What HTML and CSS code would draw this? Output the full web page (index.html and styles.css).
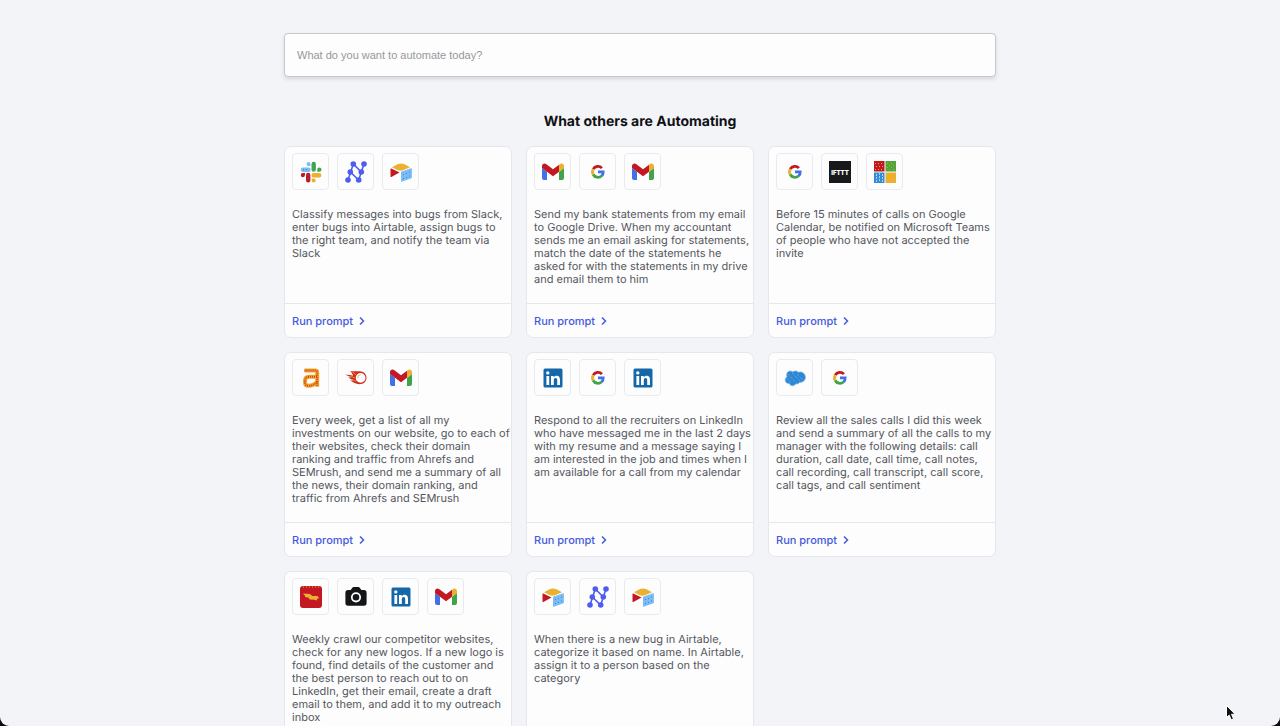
FILE: index.html
```html
<!DOCTYPE html>
<html lang="en">
<head>
    <meta charset="utf-8">
    <title>Automate</title>
    <link rel="stylesheet" href="styles.css">
</head>
<body>
    <svg class="sprite" aria-hidden="true">
        <symbol id="slack" viewBox="0 0 22 22">
            <path fill="#7abdf2" d="M8.500 1a2 2 0 0 1 2 2v2h-2a2 2 0 0 1 0-4zM3 6.500h5.500a2.200 2.200 0 0 1 0 4.400H3a2.200 2.200 0 0 1 0-4.400z"/>
            <path fill="#41a84e" d="M13.700 .8a2.200 2.200 0 0 1 2.200 2.200v5.600a2.200 2.200 0 0 1-4.400 0V3a2.200 2.200 0 0 1 2.200-2.200zM19.400 6.600a2 2 0 0 1 0 4.200h-2.200V8.700a2.100 2.100 0 0 1 2.200-2.100z"/>
            <path fill="#ebb02d" d="M13.700 12h5.500a2.200 2.200 0 0 1 0 4.400h-5.500a2.200 2.200 0 0 1 0-4.400zM11.700 17.400h2a2 2 0 1 1-2 2z"/>
            <path fill="#c41724" d="M8.200 11.800a2.200 2.200 0 0 1 2.200 2.200v5.300a2.200 2.200 0 0 1-4.400 0V14a2.200 2.200 0 0 1 2.200-2.200zM2.800 12H5v2a2.100 2.100 0 1 1-2.200-2z"/>
            <path fill="none" stroke="#3a7a8c" stroke-width=".9" stroke-dasharray="1 2" d="M3 8.700h6M13.700 2.500v6M8.200 14v6"/>
        </symbol>
        <symbol id="nanonets" viewBox="0 0 22 22">
            <path fill="none" stroke="#4d5df0" stroke-width="1.600" d="M3 19 8.300 3l8 8L19 3M5.300 11l8.400 8L16.300 11"/>
            <g fill="#4d5df0">
                <circle cx="8.300" cy="3" r="2.800"/>
                <circle cx="19" cy="3" r="2.800"/>
                <circle cx="5.300" cy="11" r="2.800"/>
                <circle cx="16.300" cy="11" r="2.800"/>
                <circle cx="3" cy="19" r="2.800"/>
                <circle cx="13.700" cy="19" r="2.800"/>
            </g>
        </symbol>
        <symbol id="airtable" viewBox="0 0 22 22">
            <path fill="#ebb02d" d="M2 6.300 8 3.100q3-1.200 6 0L20 6.300 13 9.300q-2.500.9-5 0z"/>
            <path fill="#c41724" d="M.5 8q0-.8.800-.5l8.200 4L1.400 16q-.9.400-.9-.5z"/>
            <path fill="#7abcf8" d="M11 11.400q0-.6.600-.8l9.500-3.300q.8-.3.800.5v8.800q0 .5-.5.700l-9.600 3.400q-.8.200-.8-.6z"/>
            <path fill="none" stroke="#3d74a8" stroke-width=".8" stroke-dasharray="1 3" d="M13.500 13v5M16.500 12v5M19.500 10.500v5"/>
        </symbol>
        <symbol id="gmail" viewBox="0 0 22 22">
            <path fill="#4270e8" d="M0 7l5 3.700V19H2a2 2 0 0 1-2-2z"/>
            <path fill="#3fa548" d="M17 10.700 22 7v10a2 2 0 0 1-2 2h-3z"/>
            <path fill="#c41724" d="M0 7V5.200C0 2.700 2.700 1.900 4.400 3.200L11 8.200l6-4.500v7L11 15.200z"/>
            <path fill="#ebb02d" d="M17 3.700l.7-.5C19.500 1.900 22 2.900 22 5.200V7l-5 3.700z"/>
        </symbol>
        <symbol id="google" viewBox="0 0 22 22">
            <g fill="none" stroke-width="2.800">
                <path stroke="#c41724" d="M6.200 8.200A5.400 5.400 0 0 1 14.900 7.100"/>
                <path stroke="#ebb02d" d="M6.200 13.600A5.400 5.400 0 0 1 6.200 8.200"/>
                <path stroke="#3fa548" d="M14.500 15A5.400 5.400 0 0 1 6.200 13.500"/>
                <path stroke="#4270e8" d="M11 10.900h5.200q.1 2.500-1.700 4.100"/>
            </g>
        </symbol>
        <symbol id="ifttt" viewBox="0 0 22 22">
            <path fill="#171819" d="M0 0h22v22H0z"/>
            <text class="ifttt-text" x="11" y="14" text-anchor="middle">IFTTT</text>
        </symbol>
        <symbol id="microsoft" viewBox="0 0 22 22">
            <path fill="#c41724" d="M0 0h10.500v10.500H0z"/>
            <path fill="#52a43c" d="M11.500 0H22v10.500H11.500z"/>
            <path fill="#348bd6" d="M0 11.500h10.500V22H0z"/>
            <path fill="#ebb02d" d="M11.500 11.500H22V22H11.500z"/>
            <path fill="none" stroke="#ebb02d" stroke-width="1" stroke-dasharray="1 2" d="M1 2.500h9M2 5.500h8M1 8.500h9M13 2l7 7M13 6l3 3M17 2l4 4"/>
            <path fill="none" stroke="#a6d4f7" stroke-width="1" stroke-dasharray="2 1" d="M2.500 13v8M5.500 12v9M8.500 13v8"/>
        </symbol>
        <symbol id="ahrefs" viewBox="0 0 22 22">
            <path fill="none" stroke="#f0a52c" stroke-width="4" d="M4.500 3.500H15q2.200 0 2.200 2.200v14.100M17 9.800H9q-4 0-4 4v1.500q0 3.500 3.500 3.500 5 0 8.500-4"/>
            <path fill="none" stroke="#d2451d" stroke-width="2" stroke-dasharray="1 1" d="M4.500 3.500H15q2.200 0 2.200 2.200v14M17 9.800H9q-4 0-4 4v1.500q0 3.500 3.500 3.500 5 0 8.500-4"/>
        </symbol>
        <symbol id="semrush" viewBox="0 0 22 22">
            <path fill="#cc2b1e" fill-rule="evenodd" d="M5 4.300h9.500c4 0 7 2.800 7 6.500s-3 6.500-6.900 6.500c-4 0-6.300-2.300-9.600-3.700l3 .2c-2-1.600-3.400-2.700-5-3.200l2.700-.2C4 9 2 8.300.2 7.800c2.500-.3 5.200.2 8 .9C7.600 7 6.600 5.300 5 4.300zM15.600 6a4.900 4.900 0 1 0 0 9.800 4.900 4.900 0 0 0 0-9.800z"/>
            <path fill="none" stroke="#efaa48" stroke-width=".8" d="M7.500 5.300q2.200.5 3.300 2.600M5 9.300l4.800 1.400M7 12.300l3.800 2"/>
            <path fill="none" stroke="#efaa48" stroke-width=".8" d="M12.500 11a3.200 3.200 0 0 1 3.200-3.200"/>
        </symbol>
        <symbol id="linkedin" viewBox="0 0 22 22">
            <rect x="1.500" y="1.500" width="19" height="19" rx="1.500" fill="#1468aa"/>
            <circle cx="5.800" cy="5.900" r="1.700" fill="#fff"/>
            <path fill="#fff" d="M4.400 9h2.800v9H4.400zM9 9h2.700v1.300c.6-1 1.600-1.600 2.900-1.600 2.700 0 3.400 1.800 3.400 4.200V18h-2.800v-4.600c0-1.200-.2-2.300-1.600-2.300s-1.800 1.100-1.800 2.300V18H9z"/>
        </symbol>
        <symbol id="salesforce" viewBox="0 0 22 22">
            <path fill="#2e87d3" stroke="#76b8ec" stroke-width=".8" d="M9 5.100C10.300 3.500 13 3.500 14.200 5.400c3.400-1.400 7.200 1 7.200 4.900 0 3.300-2.900 5.400-5.700 4.900-.8 1.500-2.400 2-3.900 1.500-1.500 2.800-5.300 2.600-6.500-.3-2.300.3-4.100-1.200-4.100-3.400 0-1.400.7-2.500 1.800-3.100C2 6.900 3.500 4.100 6.100 4.100q1.800 0 2.900 1z"/>
            <path fill="none" stroke="#76b8ec" stroke-width=".8" stroke-dasharray="1 1" d="M4 7l7 8M8 6l8 8M13 7l6 6M3 11l4 5"/>
        </symbol>
        <symbol id="crawler" viewBox="0 0 22 22">
            <rect width="22" height="22" rx="3" fill="#c41724"/>
            <path stroke="#ebb02d" stroke-width="1" stroke-dasharray="1 2" d="M3 1h17"/>
            <path fill="#ebb02d" d="M3 7.500l7 .6 2.300 2h5.200l1.800 2.200-2 .1-.4 2-2.500-.6-4.700-.2-1-1.800-3.500-.7-.4-1.600z"/>
        </symbol>
        <symbol id="camera" viewBox="0 0 22 22">
            <path fill="#141516" d="M3 4h2.700L7.400 1.700q.5-.7 1.300-.7h4.700q.8 0 1.300.7L16.400 4H19q2.600 0 2.600 2.600v10.500q0 2.700-2.600 2.700H3Q.4 19.800.4 17.100V6.600Q.4 4 3 4z"/>
            <circle cx="11" cy="11.300" r="4.200" fill="none" stroke="#fff" stroke-width="1.800"/>
        </symbol>
        <symbol id="chevron" viewBox="0 0 8 10">
            <path fill="none" stroke="#435ae0" stroke-width="1.500" d="M2 1.500 5.500 5 2 8.500"/>
        </symbol>
    </svg>

    <main class="page">
        <div class="container">
            <input class="search" type="text" placeholder="What do you want to automate today?" aria-label="What do you want to automate today?">
            <h1 class="title">What others are Automating</h1>

            <div class="cards">
                <div class="card">
                    <div class="card-body">
                        <div class="icons">
                            <span class="icon"><svg><use href="#slack"/></svg></span>
                            <span class="icon"><svg><use href="#nanonets"/></svg></span>
                            <span class="icon"><svg><use href="#airtable"/></svg></span>
                        </div>
                        <p class="prompt">
                            Classify messages into bugs from Slack,<br>
                            enter bugs into Airtable, assign bugs to<br>
                            the right team, and notify the team via<br>
                            Slack
                        </p>
                    </div>
                    <button class="run">Run prompt <svg><use href="#chevron"/></svg></button>
                </div>

                <div class="card">
                    <div class="card-body">
                        <div class="icons">
                            <span class="icon"><svg><use href="#gmail"/></svg></span>
                            <span class="icon"><svg><use href="#google"/></svg></span>
                            <span class="icon"><svg><use href="#gmail"/></svg></span>
                        </div>
                        <p class="prompt">
                            Send my bank statements from my email<br>
                            to Google Drive. When my accountant<br>
                            sends me an email asking for statements,<br>
                            match the date of the statements he<br>
                            asked for with the statements in my drive<br>
                            and email them to him
                        </p>
                    </div>
                    <button class="run">Run prompt <svg><use href="#chevron"/></svg></button>
                </div>

                <div class="card">
                    <div class="card-body">
                        <div class="icons">
                            <span class="icon"><svg><use href="#google"/></svg></span>
                            <span class="icon"><svg><use href="#ifttt"/></svg></span>
                            <span class="icon"><svg><use href="#microsoft"/></svg></span>
                        </div>
                        <p class="prompt">
                            Before 15 minutes of calls on Google<br>
                            Calendar, be notified on Microsoft Teams<br>
                            of people who have not accepted the<br>
                            invite
                        </p>
                    </div>
                    <button class="run">Run prompt <svg><use href="#chevron"/></svg></button>
                </div>

                <div class="card">
                    <div class="card-body">
                        <div class="icons">
                            <span class="icon"><svg><use href="#ahrefs"/></svg></span>
                            <span class="icon"><svg><use href="#semrush"/></svg></span>
                            <span class="icon"><svg><use href="#gmail"/></svg></span>
                        </div>
                        <p class="prompt">
                            Every week, get a list of all my<br>
                            investments on our website, go to each of<br>
                            their websites, check their domain<br>
                            ranking and traffic from Ahrefs and<br>
                            SEMrush, and send me a summary of all<br>
                            the news, their domain ranking, and<br>
                            traffic from Ahrefs and SEMrush
                        </p>
                    </div>
                    <button class="run">Run prompt <svg><use href="#chevron"/></svg></button>
                </div>

                <div class="card">
                    <div class="card-body">
                        <div class="icons">
                            <span class="icon"><svg><use href="#linkedin"/></svg></span>
                            <span class="icon"><svg><use href="#google"/></svg></span>
                            <span class="icon"><svg><use href="#linkedin"/></svg></span>
                        </div>
                        <p class="prompt">
                            Respond to all the recruiters on LinkedIn<br>
                            who have messaged me in the last 2 days<br>
                            with my resume and a message saying I<br>
                            am interested in the job and times when I<br>
                            am available for a call from my calendar
                        </p>
                    </div>
                    <button class="run">Run prompt <svg><use href="#chevron"/></svg></button>
                </div>

                <div class="card">
                    <div class="card-body">
                        <div class="icons">
                            <span class="icon"><svg><use href="#salesforce"/></svg></span>
                            <span class="icon"><svg><use href="#google"/></svg></span>
                        </div>
                        <p class="prompt">
                            Review all the sales calls I did this week<br>
                            and send a summary of all the calls to my<br>
                            manager with the following details: call<br>
                            duration, call date, call time, call notes,<br>
                            call recording, call transcript, call score,<br>
                            call tags, and call sentiment
                        </p>
                    </div>
                    <button class="run">Run prompt <svg><use href="#chevron"/></svg></button>
                </div>

                <div class="card">
                    <div class="card-body">
                        <div class="icons">
                            <span class="icon"><svg><use href="#crawler"/></svg></span>
                            <span class="icon"><svg><use href="#camera"/></svg></span>
                            <span class="icon"><svg><use href="#linkedin"/></svg></span>
                            <span class="icon"><svg><use href="#gmail"/></svg></span>
                        </div>
                        <p class="prompt">
                            Weekly crawl our competitor websites,<br>
                            check for any new logos. If a new logo is<br>
                            found, find details of the customer and<br>
                            the best person to reach out to on<br>
                            LinkedIn, get their email, create a draft<br>
                            email to them, and add it to my outreach<br>
                            inbox
                        </p>
                    </div>
                    <button class="run">Run prompt <svg><use href="#chevron"/></svg></button>
                </div>

                <div class="card">
                    <div class="card-body">
                        <div class="icons">
                            <span class="icon"><svg><use href="#airtable"/></svg></span>
                            <span class="icon"><svg><use href="#nanonets"/></svg></span>
                            <span class="icon"><svg><use href="#airtable"/></svg></span>
                        </div>
                        <p class="prompt">
                            When there is a new bug in Airtable,<br>
                            categorize it based on name. In Airtable,<br>
                            assign it to a person based on the<br>
                            category
                        </p>
                    </div>
                    <button class="run">Run prompt <svg><use href="#chevron"/></svg></button>
                </div>
            </div>
        </div>
    </main>

    <svg class="cursor" viewBox="0 0 12 18" aria-hidden="true">
        <path fill="#111" stroke="#fff" stroke-width="1" d="M1.500 1.500v12l2.700-2.400 2 4.700 2.300-1-2-4.500h3.700z"/>
    </svg>
</body>
</html>
```
FILE: styles.css
```css
* {
    box-sizing: border-box;
}

body {
    margin: 0;
    background-color: #0b0b0c;
    font-family: Inter, "Liberation Sans", sans-serif;
    text-rendering: geometricPrecision;
}

.sprite {
    display: none;
}

.page {
    height: 100vh;
    padding: 33px 16px;
    background-color: #f3f4f8;
    border-radius: 0 0 9px 9px;
    overflow-y: auto;
    scrollbar-width: none;
}

.container {
    max-width: 712px;
    margin: 0 auto;
}

.search {
    display: block;
    width: 100%;
    height: 44px;
    padding: 0 12px;
    border: 1px solid #c6c8cb;
    border-radius: 4px;
    background-color: #fdfdfd;
    box-shadow: 0 2px 4px rgba(0, 0, 0, 0.12);
    font-family: "Liberation Sans", Arial, sans-serif;
    font-size: 11px;
    color: #333;
}

.search::placeholder {
    color: #96989c;
}

.title {
    margin: 35px 0 14px;
    font-size: 14px;
    line-height: 20px;
    font-weight: 700;
    text-align: center;
    color: #101114;
}

.cards {
    display: grid;
    grid-template-columns: repeat(3, 1fr);
    gap: 14px;
}

.card {
    display: flex;
    flex-direction: column;
    border: 1px solid #e5e7eb;
    border-radius: 7px;
    background-color: #fdfdfd;
    overflow: hidden;
}

.card-body {
    flex: 1;
    padding: 6px 0 17px 7px;
}

.icons {
    display: flex;
    gap: 8px;
    margin-bottom: 18px;
}

.icon {
    display: flex;
    align-items: center;
    justify-content: center;
    width: 37px;
    height: 37px;
    border: 1px solid #e8eaee;
    border-radius: 4px;
}

.icon svg {
    width: 22px;
    height: 22px;
}

.ifttt-text {
    font-family: Inter, sans-serif;
    font-size: 6px;
    font-weight: 900;
    text-rendering: auto;
    fill: #fff;
}

.prompt {
    margin: 0;
    font-size: 11px;
    line-height: 13px;
    white-space: nowrap;
    color: #54575d;
}

.run {
    display: flex;
    align-items: center;
    gap: 5px;
    height: 34px;
    padding: 0 7px;
    border: none;
    border-top: 1px solid #e5e7eb;
    background-color: transparent;
    font-family: inherit;
    font-size: 11px;
    font-weight: 500;
    color: #435ae0;
    cursor: pointer;
}

.run svg {
    width: 8px;
    height: 10px;
}

.cursor {
    position: absolute;
    right: 43px;
    bottom: 4px;
    width: 12px;
    height: 18px;
}
```
